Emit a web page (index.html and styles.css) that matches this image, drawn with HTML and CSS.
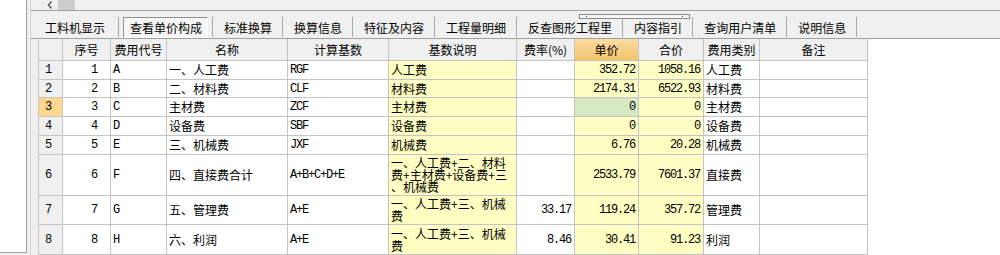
FILE: index.html
```html
<!DOCTYPE html>
<html lang="zh-CN">
<head>
  <meta charset="UTF-8">
  <title>查看单价构成</title>
  <link rel="stylesheet" href="styles.css">
</head>
<body>
  <div id="window">
    <div class="side-pane"></div>
    <div class="splitter"></div>

    <div class="main">
      <div class="hscroll">
        <svg class="arrow" width="6" height="8" viewBox="0 0 6 8">
          <polyline points="4.5,0.5 1.5,4 4.5,7.5" fill="none" stroke="#606060" stroke-width="1.6"/>
        </svg>
        <span class="thumb"></span>
      </div>

      <div class="grip"><span class="dot"></span><span class="dot"></span></div>

      <div class="tabs">
        <span class="tab">工料机显示</span><span class="sep"></span>
        <span class="tab active"><span class="label">查看单价构成</span></span><span class="sep"></span>
        <span class="tab">标准换算</span><span class="sep"></span>
        <span class="tab">换算信息</span><span class="sep"></span>
        <span class="tab">特征及内容</span><span class="sep"></span>
        <span class="tab">工程量明细</span><span class="sep"></span>
        <span class="tab">反查图形工程里</span><span class="sep"></span>
        <span class="tab">内容指引</span><span class="sep"></span>
        <span class="tab">查询用户清单</span><span class="sep"></span>
        <span class="tab">说明信息</span><span class="sep"></span>
      </div>

      <div class="grid-wrap">
        <table class="grid">
          <colgroup>
            <col style="width:24px"><col style="width:48px"><col style="width:56px">
            <col style="width:121px"><col style="width:101px"><col style="width:128px">
            <col style="width:58px"><col style="width:64px"><col style="width:65px">
            <col style="width:56px"><col style="width:108px">
          </colgroup>
          <thead>
            <tr>
              <th></th><th>序号</th><th>费用代号</th><th>名称</th><th>计算基数</th><th>基数说明</th>
              <th>费率(%)</th><th class="hot">单价</th><th>合价</th><th>费用类别</th><th>备注</th>
            </tr>
          </thead>
          <tbody id="rows"></tbody>
        </table>
      </div>
    </div>
  </div>

  <script>
    const items = [
      { no: 1, code: "A", name: "一、人工费", base: "RGF", desc: "人工费", rate: "", price: "352.72", total: "1058.16", kind: "人工费" },
      { no: 2, code: "B", name: "二、材料费", base: "CLF", desc: "材料费", rate: "", price: "2174.31", total: "6522.93", kind: "材料费" },
      { no: 3, code: "C", name: "主材费", base: "ZCF", desc: "主材费", rate: "", price: "0", total: "0", kind: "主材费", current: true },
      { no: 4, code: "D", name: "设备费", base: "SBF", desc: "设备费", rate: "", price: "0", total: "0", kind: "设备费" },
      { no: 5, code: "E", name: "三、机械费", base: "JXF", desc: "机械费", rate: "", price: "6.76", total: "20.28", kind: "机械费" },
      { no: 6, code: "F", name: "四、直接费合计", base: "A+B+C+D+E", desc: "一、人工费+二、材料费+主材费+设备费+三、机械费", rate: "", price: "2533.79", total: "7601.37", kind: "直接费", h: 41 },
      { no: 7, code: "G", name: "五、管理费", base: "A+E", desc: "一、人工费+三、机械费", rate: "33.17", price: "119.24", total: "357.72", kind: "管理费", h: 29 },
      { no: 8, code: "H", name: "六、利润", base: "A+E", desc: "一、人工费+三、机械费", rate: "8.46", price: "30.41", total: "91.23", kind: "利润", h: 30 }
    ];

    function renderRows() {
      const body = document.getElementById("rows");
      body.innerHTML = "";
      items.forEach((it, i) => {
        const tr = document.createElement("tr");
        tr.style.height = (it.h || (i === 1 ? 18 : 19)) + "px";
        tr.innerHTML =
          `<td class="rownum ${it.current ? "current" : ""}">${it.no}</td>` +
          `<td class="num seq">${it.no}</td>` +
          `<td class="mono">${it.code}</td>` +
          `<td class="txt">${it.name}</td>` +
          `<td class="mono">${it.base}</td>` +
          `<td class="txt wrap yellow">${it.desc}</td>` +
          `<td class="num">${it.rate}</td>` +
          `<td class="num ${it.current ? "green" : "yellow"}">${it.price}</td>` +
          `<td class="num yellow">${it.total}</td>` +
          `<td class="txt">${it.kind}</td>` +
          `<td></td>`;
        body.appendChild(tr);
      });
    }

    renderRows();
  </script>
</body>
</html>
```

FILE: styles.css
```css
html, body {
  margin: 0;
  padding: 0;
}

body {
  width: 1000px;
  height: 255px;
  overflow: hidden;
  background: #f0f0f0;
  font-family: "Noto Sans CJK SC", sans-serif;
  font-size: 12px;
  color: #000;
}

#window {
  display: flex;
  height: 255px;
}

.side-pane {
  width: 26px;
  height: 252px;
  background: #fff;
  border-right: 1px solid #a0a0a0;
  border-bottom: 1px solid #a0a0a0;
  flex-shrink: 0;
}

.splitter {
  width: 3px;
  flex-shrink: 0;
}

.main {
  position: relative;
  flex: 1;
  display: flex;
  flex-direction: column;
  border-left: 1px solid #d6d6d6;
}

.hscroll {
  height: 12px;
  border-bottom: 1px solid #a0a0a0;
  display: flex;
  align-items: flex-start;
}

.hscroll .arrow {
  margin: 1px 0 0 16px;
}

.hscroll .thumb {
  width: 17px;
  height: 10px;
  margin-left: 5px;
  background: #cdcdcd;
}

.grip {
  position: absolute;
  left: 548px;
  top: 14px;
  width: 97px;
  height: 3px;
  border: 1px solid #8a8a8a;
  background: #f8f8f8;
  display: flex;
  justify-content: space-between;
  padding: 0 6px;
  box-sizing: content-box;
}

.grip .dot {
  width: 1px;
  height: 1px;
  margin-top: 1px;
  background: #203060;
}

.tabs {
  height: 31px;
  box-sizing: border-box;
  padding: 5px 0 0 3px;
  border-bottom: 1px solid #a0a0a0;
  display: flex;
  align-items: center;
}

.tab {
  padding: 0 10px 0 11px;
  line-height: 21px;
  height: 21px;
  white-space: nowrap;
}

.tab:first-child {
  padding-right: 13px;
}

.tab.active .label {
  display: inline-block;
  margin: 0 -6px 0 -7px;
  padding: 0 5px 0 6px;
  height: 19px;
  line-height: 19px;
  border: 1px solid;
  border-color: #909090 #ffffff #ffffff #909090;
  background: #f7f7f7;
}

.sep {
  width: 1px;
  height: 20px;
  background: #a8a8a8;
}

.grid-wrap {
  flex: 1;
  margin-left: 7px;
  background: #fff;
}

.grid {
  border-collapse: collapse;
  table-layout: fixed;
  width: 830px;
}

.grid th,
.grid td {
  border: 1px solid #c4c4c4;
  padding: 0;
  white-space: nowrap;
}

.grid th {
  border-top: 0;
  height: 21px;
  font-weight: normal;
  background: #f0f0f0;
  text-align: center;
}

.grid th.hot {
  background: linear-gradient(#fbdda4, #f1c26c);
}

.grid td {
  vertical-align: middle;
  line-height: 12px;
}

.rownum {
  background: #f0f0f0;
  padding-left: 6px !important;
  font-family: "Liberation Mono", monospace;
  letter-spacing: -1.2px;
}

.rownum.current {
  background: #ffd78f;
}

.num {
  text-align: right;
  padding-right: 3px !important;
  font-family: "Liberation Mono", monospace;
  letter-spacing: -1.2px;
}

.num.seq {
  padding-right: 13px !important;
}

.mono {
  padding-left: 2px !important;
  font-family: "Liberation Mono", monospace;
  letter-spacing: -1.2px;
}

.txt {
  padding-left: 2px !important;
}

.wrap {
  white-space: normal !important;
  line-break: anywhere;
  word-break: break-all;
}

.yellow {
  background: #ffffc4;
}

.green {
  background: #d6e7c6;
}
```
